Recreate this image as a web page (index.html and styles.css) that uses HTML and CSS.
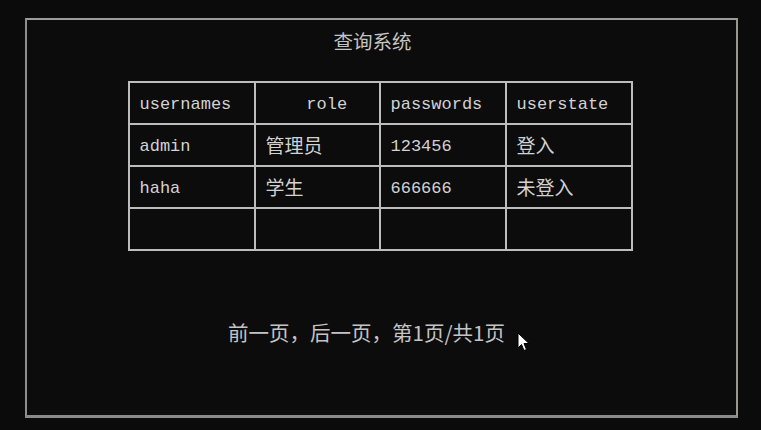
FILE: index.html
```html
<!DOCTYPE html>
<html lang="zh">
<head>
<meta charset="utf-8">
<title>查询系统</title>
<link rel="stylesheet" href="styles.css">
</head>
<body>
<div class="frame">
  <h1 class="title">查询系统</h1>
  <table class="grid">
    <tr>
      <td>usernames</td>
      <td>&nbsp;&nbsp;&nbsp;&nbsp;role</td>
      <td>passwords</td>
      <td>userstate</td>
    </tr>
    <tr>
      <td>admin</td>
      <td><span class="cjk">管理员</span></td>
      <td>123456</td>
      <td><span class="cjk">登入</span></td>
    </tr>
    <tr>
      <td>haha</td>
      <td><span class="cjk">学生</span></td>
      <td>666666</td>
      <td><span class="cjk">未登入</span></td>
    </tr>
    <tr>
      <td></td>
      <td></td>
      <td></td>
      <td></td>
    </tr>
  </table>
  <p class="pager">前一页，后一页，第1页/共1页</p>
  <svg class="cursor" width="13" height="20" viewBox="0 0 13 20">
    <path d="M1 1 L1 16 L4.5 12.5 L7 18.5 L9.5 17.5 L7 11.5 L12 11.5 Z" fill="#fff" stroke="#000" stroke-width="1"/>
  </svg>
</div>
</body>
</html>
```

FILE: styles.css
```css
html, body {
  margin: 0;
  padding: 0;
  background: #0b0b0b;
}
body {
  width: 761px;
  height: 430px;
  overflow: hidden;
  padding: 18px 23px 12px 25px;
  box-sizing: border-box;
}
.frame {
  position: relative;
  height: 400px;
  box-sizing: border-box;
  border-top: 2px solid #9c9c9c;
  border-left: 2px solid #8e8e8e;
  border-right: 2px solid #9a978f;
  border-bottom: 3px solid #8a8a8a;
  background: #0c0c0c;
  display: flex;
  flex-direction: column;
  align-items: center;
  padding-top: 9px;
}
.title {
  margin: 0;
  padding-right: 18px;
  font-family: "Noto Sans CJK SC", sans-serif;
  font-size: 19.5px;
  font-weight: normal;
  line-height: 24px;
  color: #c4c4c4;
}
.grid {
  margin-top: 28px;
  margin-right: 3px;
  border-collapse: collapse;
  font-family: "Liberation Mono", "Noto Sans CJK SC", monospace;
  font-size: 17px;
  color: #d2d2d2;
}
.grid td {
  border: 2px solid #bdbdbd;
  width: 126px;
  height: 42px;
  padding: 3px 0 0 10px;
  box-sizing: border-box;
  white-space: pre;
  vertical-align: middle;
  line-height: 24px;
}
.grid td:nth-child(2) {
  width: 125px;
}
.cjk {
  font-family: "Noto Sans CJK SC", sans-serif;
  font-size: 19px;
}
.pager {
  margin: 68px 0 0 0;
  padding-right: 30px;
  font-family: "Noto Sans CJK SC", sans-serif;
  font-size: 20.5px;
  line-height: 26px;
  color: #c4c4c4;
}
.cursor {
  position: absolute;
  left: 490px;
  top: 312px;
}
```
